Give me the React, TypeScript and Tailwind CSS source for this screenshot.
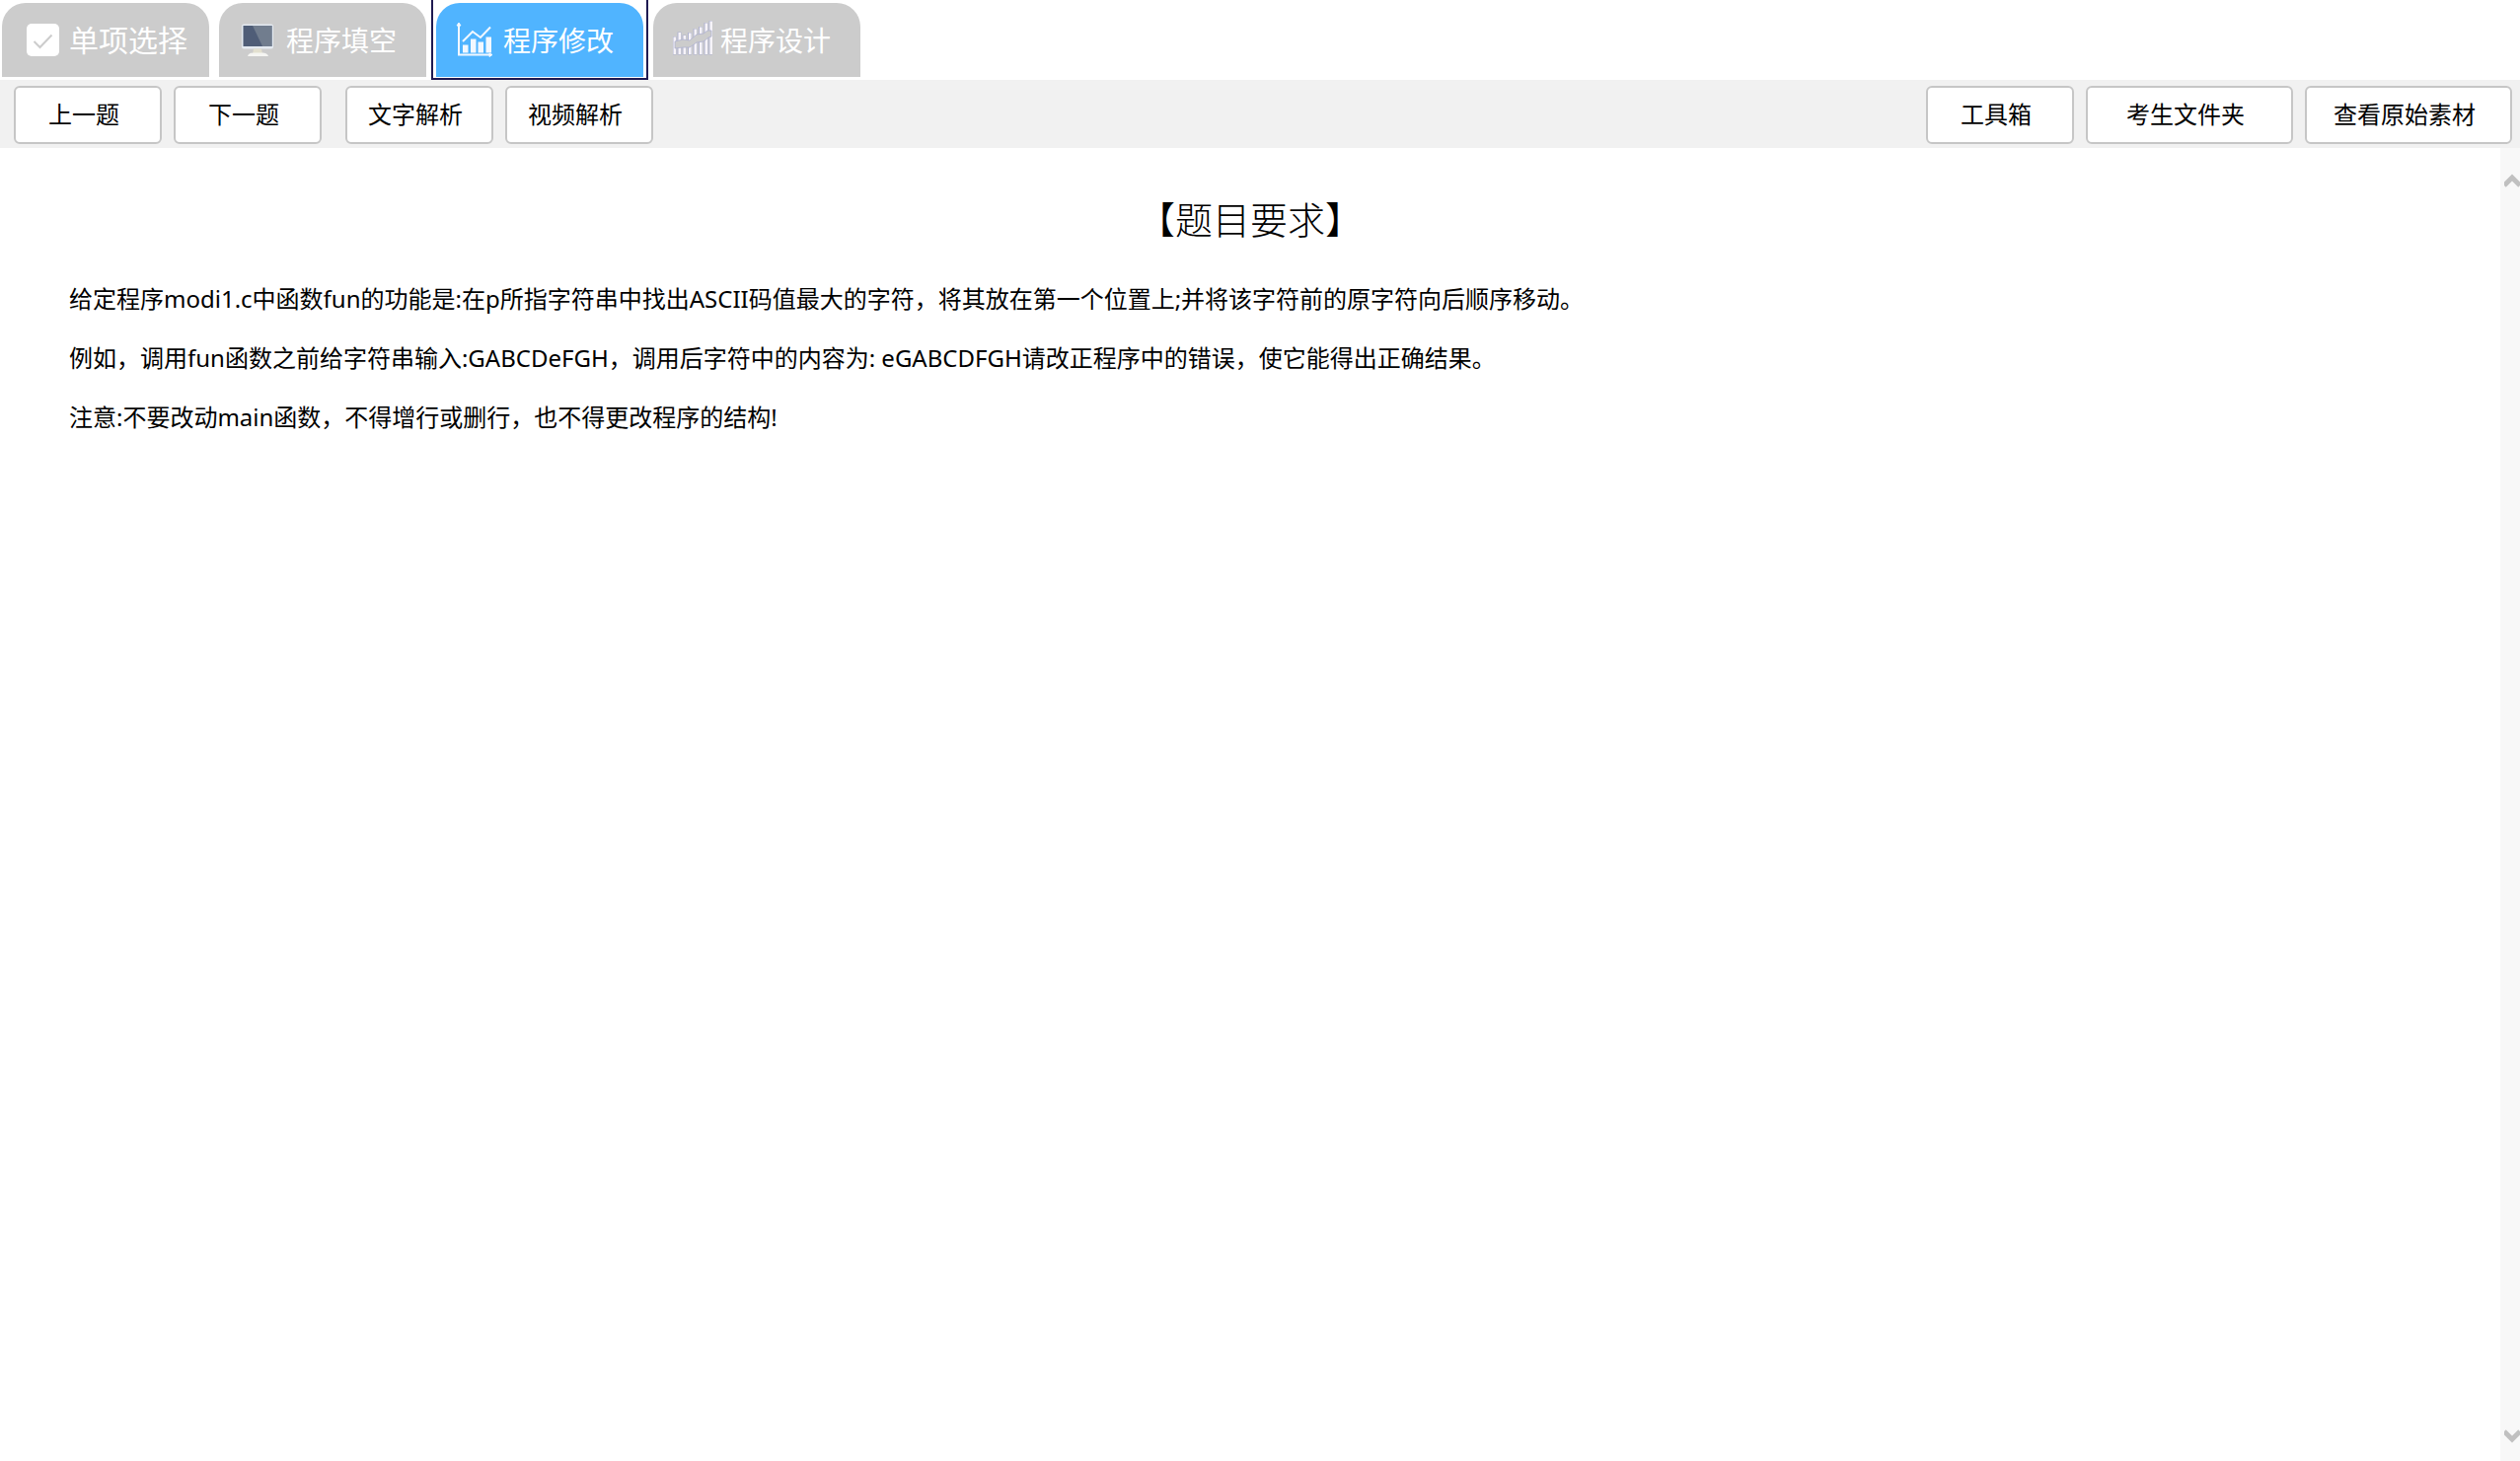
import { useState } from 'react';
import type { ReactNode } from 'react';

const CheckIcon = () => (
  <svg className="h-10 w-10" viewBox="0 0 40 40" fill="none">
    <rect x="5" y="3" width="33" height="33" rx="5" fill="#fff" />
    <path d="M12.500 21l6 6 12-12.500" stroke="#ccc" strokeWidth="2" />
  </svg>
);

const MonitorIcon = () => (
  <svg className="h-10 w-10" viewBox="0 0 40 40" fill="none">
    <rect x="3" y="3.500" width="32" height="25" rx="2" fill="#e4eaf1" />
    <rect x="4.500" y="5" width="29" height="21" fill="#4f5d77" />
    <path d="M14 5h19.500v21h-9.500z" fill="#717d8e" />
    <path d="M15 28.500h8l1 5h-10z" fill="#e3e0cf" />
    <path d="M9 36q1-3.500 6-3.500h9q5 0 6 3.500z" fill="#f5f5f2" />
  </svg>
);

const ChartIcon = () => (
  <svg className="h-10 w-10" viewBox="0 0 40 40" fill="none" stroke="#f2f8ff">
    <path d="M3 3v31.500h32" strokeWidth="2" />
    <path d="M1 5L3 2l2 3zM34 33l3 1.500-3 2z" fill="#f2f8ff" strokeWidth="1" />
    <path d="M7 21l10-10 8 6 10-10.500" strokeWidth="2" />
    <path d="M7 24.500h5.500v8H7zM15 18.500h5.500v14H15zM22.500 21.500H28v11h-5.500zM30.500 16.500H36v16h-5.500z" fill="#f2f8ff" stroke="none" />
  </svg>
);

const BarsIcon = () => (
  <svg className="h-10 w-10" viewBox="0 0 40 40" fill="none">
    <path
      d="M1.500 16v18.500M6.500 11.500v23M11.500 14.500v20M17 12v22.500M22.500 8v26.500M28 6v28.500M33.500 2v32.500M38.500 0v34.500"
      stroke="#b0b3d0"
      strokeWidth="4"
    />
    <path
      d="M1.800 16.500v17.500M6.800 12v22M11.800 15v19M17.300 12.500v21.500M22.800 8.500v25.500M28.300 6.500v27.500M33.800 2.500v31.500M38.700.500v33.500"
      stroke="#f6f3f8"
      strokeWidth="2.600"
    />
    <path d="M2 21l8-2 7 1 7-6 7-1 4-3h4v6l-3 1-5 4-7 1-7 5-7 0-8 1z" fill="#ccc" stroke="#b0b3d0" strokeWidth=".8" />
  </svg>
);

type Tab = { id: string; label: string; icon: ReactNode; size: string };

const tabs: Tab[] = [
  { id: 'choice', label: '单项选择', icon: <CheckIcon />, size: 'text-[30px]' },
  { id: 'blank', label: '程序填空', icon: <MonitorIcon />, size: 'text-[28px]' },
  { id: 'modify', label: '程序修改', icon: <ChartIcon />, size: 'text-[28px]' },
  { id: 'design', label: '程序设计', icon: <BarsIcon />, size: 'text-[28px]' },
];

function ToolButton({ children, wide }: { children: ReactNode; wide?: boolean }) {
  return (
    <button
      type="button"
      className={`h-[59px] rounded-md border-2 border-[#c6c6c6] bg-white pr-2 pb-[2px] text-2xl ${wide ? 'w-[210px]' : 'w-[150px]'}`}
    >
      {children}
    </button>
  );
}

function App() {
  const [active, setActive] = useState('modify');

  return (
    <div className="flex h-screen flex-col bg-white font-['Noto_Sans','Noto_Sans_CJK_SC',sans-serif] text-black">
      <nav className="flex h-[81px] shrink-0 gap-[10px] pt-[3px] pl-[2px]">
        {tabs.map((tab) => (
          <div key={tab.id} className="relative h-[75px]">
            <button
              type="button"
              onClick={() => setActive(tab.id)}
              className={`flex h-full w-[210px] items-center gap-2 rounded-t-3xl pl-5 text-white ${tab.size} ${active === tab.id ? 'bg-[#50b4ff]' : 'bg-[#ccc]'}`}
            >
              {tab.icon}
              {tab.label}
            </button>
            {active === tab.id && (
              <span className="pointer-events-none absolute -inset-x-[5px] -top-[3px] -bottom-[3px] border-2 border-t-0 border-[#1f1a52]" />
            )}
          </div>
        ))}
      </nav>

      <div className="flex shrink-0 justify-between bg-[#f1f1f1] pt-[6px] pr-2 pb-1 pl-[14px]">
        <div className="flex gap-6">
          <div className="flex gap-3">
            <ToolButton>上一题</ToolButton>
            <ToolButton>下一题</ToolButton>
          </div>
          <div className="flex gap-3">
            <ToolButton>文字解析</ToolButton>
            <ToolButton>视频解析</ToolButton>
          </div>
        </div>
        <div className="flex gap-3">
          <ToolButton>工具箱</ToolButton>
          <ToolButton wide>考生文件夹</ToolButton>
          <ToolButton wide>查看原始素材</ToolButton>
        </div>
      </div>

      <div className="flex min-h-0 flex-1">
        <main className="flex-1 px-[70px] pt-[46px]">
          <h1 className="text-center text-[38px] leading-[52px] font-light">【题目要求】</h1>
          <div className="pt-[25px] text-2xl leading-[60px]">
            <p>给定程序modi1.c中函数fun的功能是:在p所指字符串中找出ASCII码值最大的字符，将其放在第一个位置上;并将该字符前的原字符向后顺序移动。</p>
            <p>例如，调用fun函数之前给字符串输入:GABCDeFGH，调用后字符中的内容为: eGABCDFGH请改正程序中的错误，使它能得出正确结果。</p>
            <p>注意:不要改动main函数，不得增行或删行，也不得更改程序的结构!</p>
          </div>
        </main>
        <div className="flex w-5 flex-col justify-between bg-[#f8f8f8] pt-5 pb-[14px] pl-1">
          <svg className="h-5 w-4" viewBox="0 0 16 20" fill="none">
            <path d="M0 18l8-8 8 8" stroke="#c0c0c0" strokeWidth="5" />
          </svg>
          <svg className="h-5 w-4" viewBox="0 0 16 20" fill="none">
            <path d="M0 4l8 8 8-8" stroke="#c0c0c0" strokeWidth="5" />
          </svg>
        </div>
      </div>
    </div>
  );
}

export default App;
